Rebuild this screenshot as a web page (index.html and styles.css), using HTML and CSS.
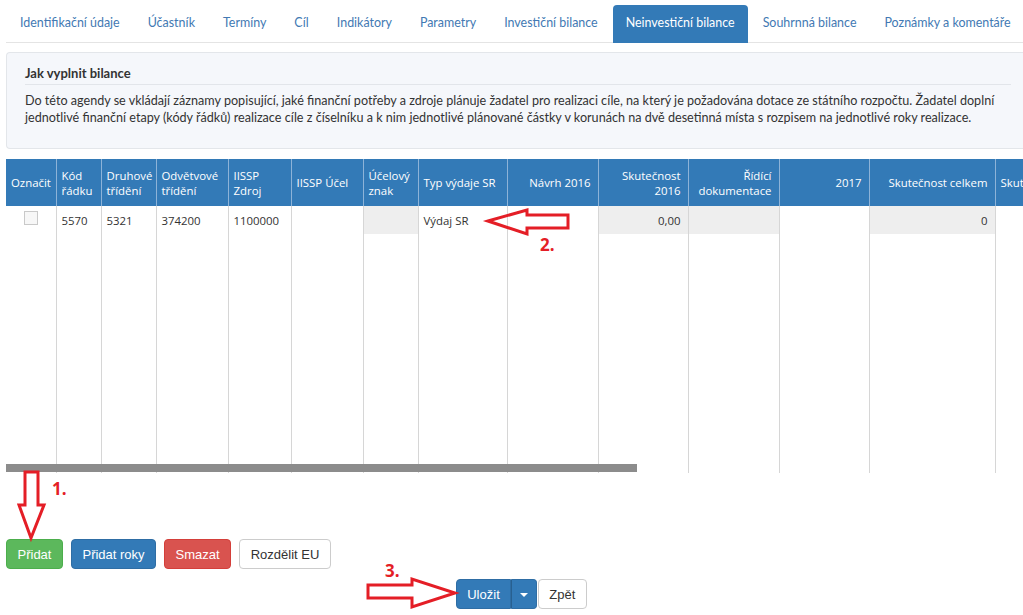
FILE: index.html
```html
<!DOCTYPE html>
<html lang="cs">

<head>
    <meta charset="UTF-8">
    <title>Neinvestiční bilance</title>
    <link rel="stylesheet" href="styles.css">
</head>

<body>
    <div class="page">
        <ul class="tabs">
            <li><a href="#">Identifikační údaje</a></li>
            <li><a href="#">Účastník</a></li>
            <li><a href="#">Termíny</a></li>
            <li><a href="#">Cíl</a></li>
            <li><a href="#">Indikátory</a></li>
            <li><a href="#">Parametry</a></li>
            <li><a href="#">Investiční bilance</a></li>
            <li class="active"><a href="#">Neinvestiční bilance</a></li>
            <li><a href="#">Souhrnná bilance</a></li>
            <li><a href="#">Poznámky a komentáře</a></li>
        </ul>

        <div class="info">
            <div class="info-title">Jak vyplnit bilance</div>
            <p class="info-text">Do této agendy se vkládají záznamy popisující, jaké finanční potřeby a zdroje plánuje žadatel pro realizaci cíle, na který je požadována dotace ze státního rozpočtu. Žadatel doplní<br>jednotlivé finanční etapy (kódy řádků) realizace cíle z číselníku a k nim jednotlivé plánované částky v korunách na dvě desetinná místa s rozpisem na jednotlivé roky realizace.</p>
        </div>

        <div class="grid">
            <table class="bilance">
                <colgroup>
                    <col style="width:50px">
                    <col style="width:45px">
                    <col style="width:55px">
                    <col style="width:72px">
                    <col style="width:63px">
                    <col style="width:72px">
                    <col style="width:55px">
                    <col style="width:89px">
                    <col style="width:91px">
                    <col style="width:90px">
                    <col style="width:91px">
                    <col style="width:90px">
                    <col style="width:126px">
                    <col style="width:110px">
                </colgroup>
                <thead>
                    <tr>
                        <th>Označit</th>
                        <th>Kód<br>řádku</th>
                        <th>Druhové<br>třídění</th>
                        <th>Odvětvové<br>třídění</th>
                        <th>IISSP<br>Zdroj</th>
                        <th>IISSP Účel</th>
                        <th>Účelový<br>znak</th>
                        <th>Typ výdaje SR</th>
                        <th class="num">Návrh 2016</th>
                        <th class="num">Skutečnost<br>2016</th>
                        <th class="num">Řídící<br>dokumentace</th>
                        <th class="num">2017</th>
                        <th class="num">Skutečnost celkem</th>
                        <th>Skutečnost</th>
                    </tr>
                </thead>
                <tbody>
                    <tr class="data-row">
                        <td class="check"><span class="box"></span></td>
                        <td>5570</td>
                        <td>5321</td>
                        <td>374200</td>
                        <td>1100000</td>
                        <td></td>
                        <td class="ro"></td>
                        <td>Výdaj SR</td>
                        <td></td>
                        <td class="ro num">0,00</td>
                        <td class="ro"></td>
                        <td></td>
                        <td class="ro num">0</td>
                        <td></td>
                    </tr>
                    <tr class="filler">
                        <td></td><td></td><td></td><td></td><td></td><td></td><td></td>
                        <td></td><td></td><td></td><td></td><td></td><td></td><td></td>
                    </tr>
                </tbody>
            </table>
            <div class="hscroll"></div>
        </div>

        <div class="actions">
            <button class="btn btn-green">Přidat</button>
            <button class="btn btn-blue">Přidat roky</button>
            <button class="btn btn-red">Smazat</button>
            <button class="btn btn-white">Rozdělit EU</button>
        </div>

        <div class="save">
            <div class="btn-group">
                <button class="btn btn-blue">Uložit</button>
                <button class="btn btn-blue btn-caret"><span class="caret"></span></button>
            </div>
            <button class="btn btn-white">Zpět</button>
        </div>
    </div>

    <!-- červené šipky s návodem -->
    <svg class="marks" width="1023" height="615" viewBox="0 0 1023 615">
        <polygon points="25,472 38,472 38,505 44,505 31,538 19,505 25,505" />
        <polygon points="488,221 527,210 527,215 568,215 568,228 527,228 527,234" />
        <polygon points="368,585 412,585 412,579 455,593 412,607 412,598 368,598" />
    </svg>
    <span class="mark mark-1">1.</span>
    <span class="mark mark-2">2.</span>
    <span class="mark mark-3">3.</span>
</body>

</html>
```

FILE: styles.css
```css
body {
    margin: 0;
    padding: 0;
    background: #fff;
    font-family: "Lato", "Open Sans", sans-serif;
    color: #333;
    position: relative;
    width: 1023px;
    height: 615px;
    overflow: hidden;
}

.page {
    padding: 5px 0 0 6px;
}

/* záložky */
.tabs {
    list-style: none;
    margin: 0;
    padding: 0 0 0 1px;
    display: flex;
    border-bottom: 1px solid #e4e4e4;
    height: 37px;
    white-space: nowrap;
}

.tabs li {
    margin-right: 2px;
}

.tabs a {
    display: block;
    height: 37px;
    line-height: 36px;
    padding: 0 13px;
    font-size: 12.45px;
    color: #4279b3;
    text-decoration: none;
    border-radius: 4px 4px 0 0;
}

.tabs .active a {
    background: #337ab7;
    color: #fff;
    height: 38px;
}

/* nápověda */
.info {
    margin-top: 9px;
    background: #f5f7fb;
    border: 1px solid #e3e6ea;
    border-right: none;
    border-radius: 4px 0 0 4px;
    padding: 11px 0 22px 18px;
    height: 62px;
}

.info-title {
    font-size: 13px;
    font-weight: bold;
    color: #333;
    line-height: 18px;
    padding-bottom: 2px;
    border-bottom: 1px solid #e2e5ea;
    margin-right: 12px;
}

.info-text {
    margin: 7px 0 0;
    font-size: 12.6px;
    line-height: 17px;
    white-space: nowrap;
    color: #333;
}

/* tabulka */
.grid {
    margin-top: 10px;
    position: relative;
    overflow: hidden;
    height: 314px;
}

.bilance {
    border-collapse: collapse;
    table-layout: fixed;
    width: 1099px;
    font-family: "Open Sans", "Lato", sans-serif;
    font-size: 11.4px;
}

.bilance th {
    background: #337ab7;
    color: #fff;
    font-weight: normal;
    text-align: left;
    vertical-align: middle;
    height: 47px;
    padding: 0 5px;
    line-height: 15px;
    border-left: 1px solid #8db3d8;
    box-sizing: border-box;
    white-space: nowrap;
    overflow: hidden;
}

.bilance th:first-child {
    border-left: none;
}

.bilance .num {
    text-align: right;
    padding-right: 7px;
}

.bilance td {
    border-left: 1px solid #d6d6d6;
    padding: 0 5px;
    color: #333;
    white-space: nowrap;
}

.bilance td:first-child {
    border-left: none;
}

.data-row td {
    height: 28px;
    vertical-align: top;
    padding-top: 7px;
    box-sizing: border-box;
}

.data-row td.ro {
    background: #eeeeee;
}

.data-row td.check {
    text-align: center;
    padding-top: 5px;
}

.box {
    display: inline-block;
    width: 12px;
    height: 12px;
    border: 1px solid #c9c9c9;
    background: #f7f7f7;
}

.filler td {
    height: 239px;
}

.hscroll {
    position: absolute;
    left: 0;
    top: 305px;
    width: 631px;
    height: 8px;
    background: #8c8c8c;
}

/* tlačítka */
.actions {
    margin-top: 66px;
    display: flex;
    gap: 8px;
}

.btn {
    font-family: "Liberation Sans", Arial, sans-serif;
    font-size: 13px;
    height: 30px;
    padding: 0 10.5px;
    border: 1px solid transparent;
    border-radius: 4px;
    color: #fff;
    cursor: pointer;
}

.btn-green {
    background: #5cb85c;
    border-color: #4cae4c;
}

.btn-blue {
    background: #337ab7;
    border-color: #2e6da4;
}

.btn-red {
    background: #d9534f;
    border-color: #d43f3a;
}

.btn-white {
    background: #fff;
    border-color: #ccc;
    color: #333;
}

.save {
    margin-top: 10px;
    display: flex;
    justify-content: center;
    gap: 1px;
    padding-left: 14px;
}

.btn-group {
    display: flex;
}

.btn-group .btn:first-child {
    border-radius: 4px 0 0 4px;
    padding: 0 10px;
}

.btn-caret {
    border-radius: 0 4px 4px 0;
    border-left-color: #286090;
    padding: 0 8px;
    width: 26px;
}

.caret {
    display: inline-block;
    width: 0;
    height: 0;
    border-top: 4px solid #fff;
    border-left: 4px solid transparent;
    border-right: 4px solid transparent;
    vertical-align: middle;
}

/* poznámky */
.marks {
    position: absolute;
    left: 0;
    top: 0;
    pointer-events: none;
}

.marks polygon {
    fill: none;
    stroke: #e41e26;
    stroke-width: 3;
    stroke-linejoin: miter;
}

.mark {
    position: absolute;
    font-family: "Open Sans", sans-serif;
    font-weight: bold;
    font-size: 17px;
    line-height: 18px;
    color: #e41e26;
}

.mark-1 {
    left: 52px;
    top: 480px;
}

.mark-2 {
    left: 540px;
    top: 236px;
}

.mark-3 {
    left: 385px;
    top: 562px;
}
```
